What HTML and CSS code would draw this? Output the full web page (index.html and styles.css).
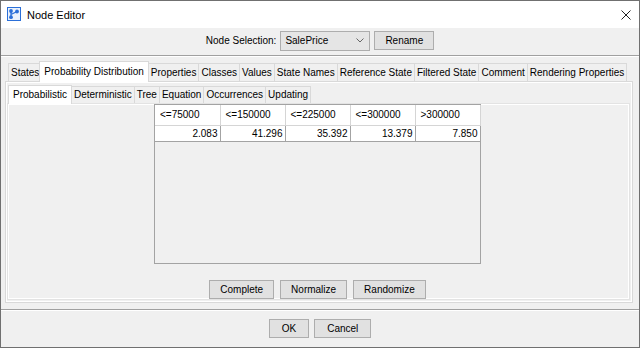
FILE: index.html
```html
<!DOCTYPE html>
<html>
<head>
	<title>Node Editor</title>
	<link rel="stylesheet" href="styles.css">
</head>
<body>
<div class="window">

	<div class="titlebar">
		<svg class="app-icon" width="14" height="14" viewBox="0 0 14 14">
			<rect x="0.5" y="0.5" width="13" height="13" fill="#eaf2fd" stroke="#2b6fd8"/>
			<path d="M4 4 L4 10 M4 7.5 L10 4.5" stroke="#2b6fd8" stroke-width="1.3" fill="none"/>
			<circle cx="4" cy="4" r="1.9" fill="#2b6fd8"/>
			<circle cx="10" cy="4.5" r="1.9" fill="#2b6fd8"/>
			<circle cx="4" cy="10.2" r="1.9" fill="#2b6fd8"/>
		</svg>
		<span class="title">Node Editor</span>
		<svg class="close" width="10" height="10" viewBox="0 0 10 10">
			<path d="M0.5 0.5 L9.5 9.5 M9.5 0.5 L0.5 9.5" stroke="#222" stroke-width="1" fill="none"/>
		</svg>
	</div>

	<div class="client">

		<div class="selector">
			<label for="node">Node Selection:</label>
			<div class="combo" id="node">
				<span>SalePrice</span>
				<svg width="8" height="5" viewBox="0 0 8 5"><path d="M0.5 0.5 L4 4 L7.5 0.5" stroke="#666" fill="none"/></svg>
			</div>
			<button class="btn">Rename</button>
		</div>

		<div class="tabs-area">
			<div class="tabstrip">
				<div class="tab">States</div>
				<div class="tab active">Probability Distribution</div>
				<div class="tab">Properties</div>
				<div class="tab">Classes</div>
				<div class="tab">Values</div>
				<div class="tab">State Names</div>
				<div class="tab">Reference State</div>
				<div class="tab">Filtered State</div>
				<div class="tab">Comment</div>
				<div class="tab">Rendering Properties</div>
			</div>

			<div class="tabpanel">
				<div class="tabstrip sub">
					<div class="tab active">Probabilistic</div>
					<div class="tab">Deterministic</div>
					<div class="tab">Tree</div>
					<div class="tab">Equation</div>
					<div class="tab">Occurrences</div>
					<div class="tab">Updating</div>
				</div>

				<div class="subpanel">
					<div class="grid-frame">
						<table class="grid">
							<tr>
								<th>&lt;=75000</th>
								<th>&lt;=150000</th>
								<th>&lt;=225000</th>
								<th>&lt;=300000</th>
								<th>&gt;300000</th>
							</tr>
							<tr>
								<td>2.083</td>
								<td>41.296</td>
								<td>35.392</td>
								<td>13.379</td>
								<td>7.850</td>
							</tr>
						</table>
					</div>

					<div class="actions">
						<button class="btn">Complete</button>
						<button class="btn">Normalize</button>
						<button class="btn">Randomize</button>
					</div>
				</div>
			</div>
		</div>

		<div class="footer">
			<button class="btn wide">OK</button>
			<button class="btn wide">Cancel</button>
		</div>

	</div>
</div>
</body>
</html>
```

FILE: styles.css
```css
* {
	box-sizing: border-box;
}

body {
	margin: 0;
	font-family: "Liberation Sans", Arial, sans-serif;
	font-size: 10px;
	color: #000;
	background: #fff;
}

.window {
	width: 640px;
	height: 348px;
	border: 1px solid #707070;
	display: flex;
	flex-direction: column;
	background: #f0f0f0;
}

.titlebar {
	height: 27px;
	background: #fff;
	display: flex;
	align-items: center;
	flex-shrink: 0;
}
.app-icon {
	margin-left: 6px;
	margin-top: -1px;
}
.title {
	margin-left: 6px;
	font-size: 11px;
	color: #000;
}
.close {
	margin-left: auto;
	margin-right: 8px;
}

.client {
	flex: 1;
	display: flex;
	flex-direction: column;
}

/* node selection row */
.selector {
	height: 28px;
	display: flex;
	align-items: center;
	justify-content: center;
	gap: 4px;
	border-bottom: 1px solid #a0a0a0;
	box-shadow: 0 1px 0 #fff;
	padding-bottom: 2px;
}
.combo {
	width: 90px;
	height: 20px;
	border: 1px solid #adadad;
	background: #e5e5e5;
	display: flex;
	align-items: center;
	justify-content: space-between;
	padding: 0 5px 0 4px;
}

.btn {
	font-family: "Liberation Sans", Arial, sans-serif;
	font-size: 10px;
	color: #000;
	height: 19px;
	padding: 0 10px;
	background: #e1e1e1;
	border: 1px solid #adadad;
	border-radius: 0;
}
.btn.wide {
	padding: 0 12px;
}

/* tabs */
.tabs-area {
	flex: 1;
	display: flex;
	flex-direction: column;
	padding: 4px 6px 6px 4px;
	margin-top: 1px;
}
.tabstrip {
	display: flex;
	align-items: flex-end;
	height: 20px;
	padding-left: 3px;
	flex-shrink: 0;
}
.tab {
	height: 18px;
	line-height: 17px;
	padding: 0 2px;
	border: 1px solid #d9d9d9;
	border-bottom: none;
	margin-right: -1px;
	background: #f0f0f0;
	white-space: nowrap;
}
.tab.active {
	height: 21px;
	line-height: 19px;
	background: #fff;
	padding: 0 4px;
	margin: 0 -1px -1px -2px;
	position: relative;
	z-index: 1;
}

.tabpanel {
	flex: 1;
	display: flex;
	flex-direction: column;
	border: 1px solid #d9d9d9;
	box-shadow: inset 0 0 0 1px #fff;
	padding: 0 2px 2px 1px;
}
.tabstrip.sub {
	height: 21px;
	padding-left: 1px;
}
.tabstrip.sub .tab {
	height: 17px;
	line-height: 16px;
}
.tabstrip.sub .tab.active {
	height: 19px;
	line-height: 18px;
	padding: 0 4px;
	margin: 0 -1px -1px 0;
}

.subpanel {
	flex: 1;
	display: flex;
	flex-direction: column;
	align-items: center;
	border: 1px solid #e3e3e3;
	box-shadow: inset 0 0 0 1px #fff;
	padding-right: 2px;
}

/* probability table */
.grid-frame {
	width: 327px;
	height: 160px;
	border: 1px solid #a3a3a3;
	background: #f0f0f0;
}
.grid {
	border-collapse: collapse;
	table-layout: fixed;
	width: 325px;
}
.grid th {
	width: 65px;
	height: 20px;
	padding: 0 5px;
	text-align: left;
	font-weight: normal;
	background: #fff;
	border-right: 1px solid #d5d5d5;
	border-bottom: 1px solid #d5d5d5;
}
.grid td {
	height: 16px;
	padding: 0 2px;
	text-align: right;
	background: #fff;
	border-right: 1px solid #a3a3a3;
	border-bottom: 1px solid #a3a3a3;
}

.actions {
	display: flex;
	gap: 6px;
	margin-top: 16px;
}

.footer {
	height: 38px;
	flex-shrink: 0;
	display: flex;
	align-items: center;
	justify-content: center;
	gap: 5px;
	border-top: 1px solid #a0a0a0;
	box-shadow: inset 0 1px 0 #fff;
	padding-bottom: 1px;
}
```
